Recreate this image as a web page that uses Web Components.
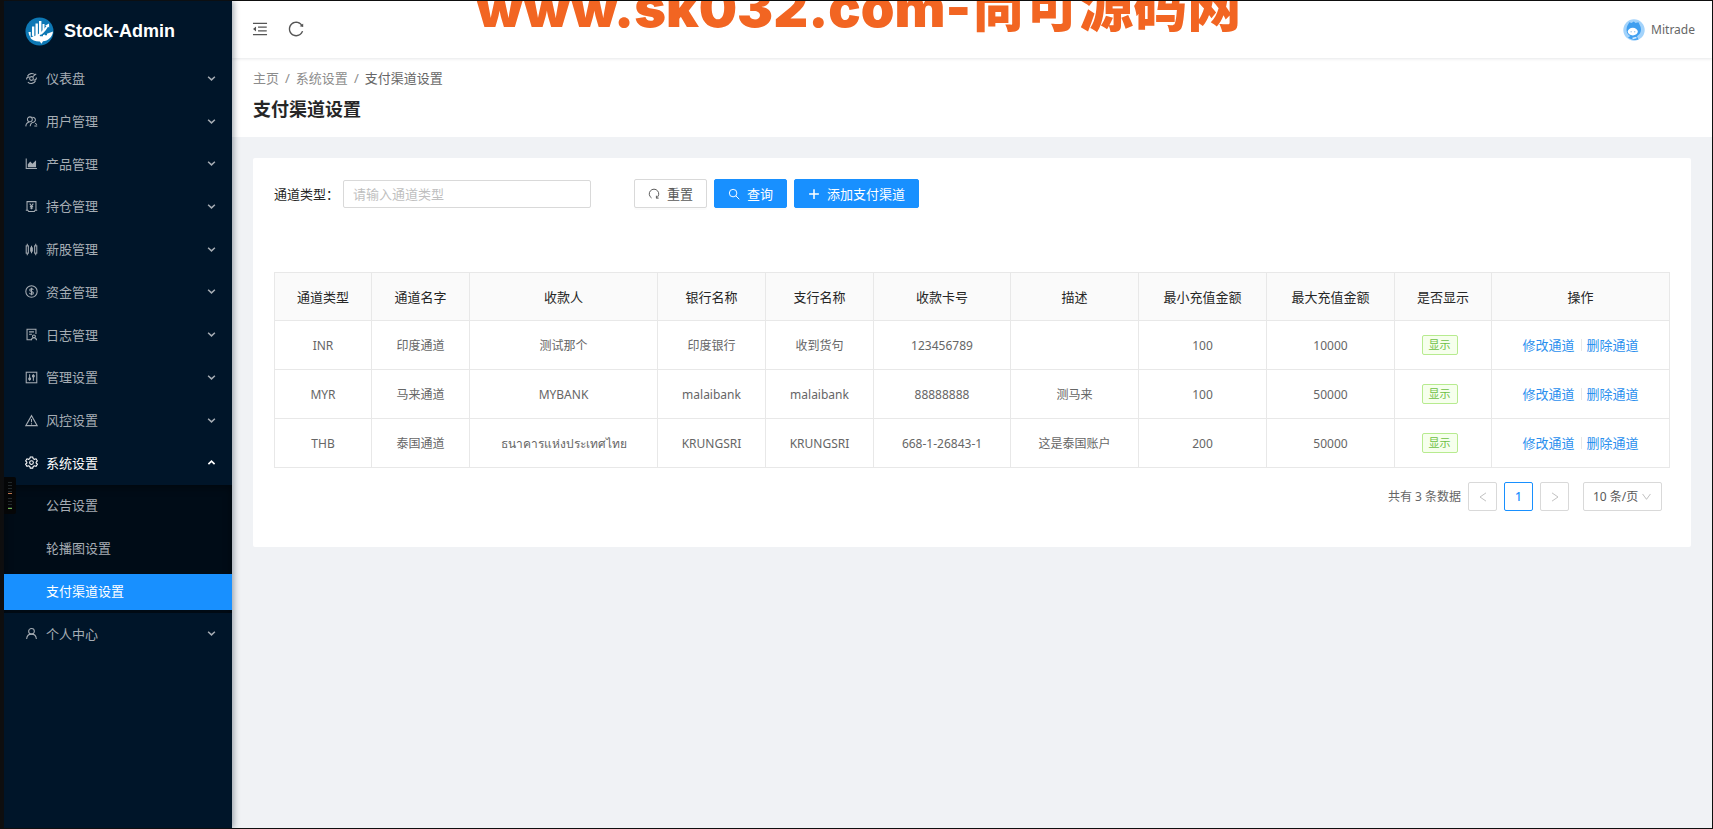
<!DOCTYPE html>
<html lang="zh-CN">
<head>
<meta charset="utf-8">
<title>Stock-Admin - 支付渠道设置</title>
<style>
  html, body { margin: 0; height: 100%; }
  body { font-family: "Noto Sans", "Noto Sans CJK SC", sans-serif; font-size: 12px; line-height: 20px; color: #666; background: #0f0f0f; }
</style>
</head>
<body>
<stock-app></stock-app>
<script>
const make = (tag, html, setup) => {
  const template = document.createElement('template');
  template.innerHTML = html;
  customElements.define(tag, class extends HTMLElement {
    constructor() {
      super();
      this.attachShadow({ mode: 'open' });
    }
    connectedCallback() {
      if (this.shadowRoot.childNodes.length) return;
      this.shadowRoot.append(template.content.cloneNode(true));
      if (setup) setup(this, this.shadowRoot);
    }
  });
};

/* Line icons live in a 16-unit box; the solid ones in a 1024-unit box. */
const ICONS = {
  dash: '<path d="M3 5.2A6 6 0 0 1 12.5 3.6M2 9.2C1.8 7 3.2 6 5.5 6M13 10.8A6 6 0 0 1 3.5 12.4M14 6.8c.2 2.2-1.2 3.2-3.5 3.2M13.8 2.2 9.5 5.8"/><circle cx="8" cy="8" r="2.3"/>',
  users: '<circle cx="6" cy="5.3" r="3"/><path d="M1 14c.2-3 1.8-5 4.4-5.4M9 3a3 3 0 1 1 1.6 5.8c-2.6.3-4 2.4-4.2 5M12.5 10c1 .6 1.7 1.4 2 2.2M11.5 13.5h3.5"/>',
  area: '<path d="M1.5 1.8v12.4h13.2"/><path fill="currentColor" stroke="none" d="M3.5 12.5V9l3-3.5 2.6 2.7L13.6 4v8.5z"/>',
  wallet: '<path d="M2.5 12.5V2h11v10.5M1 12.5h2.5l1 1.7h7l1-1.7H15M5.8 4.5 8 7.4l2.2-2.9M8 7.4v4M6 8h4M6 9.8h4"/>',
  candle: '<rect x="1.5" y="3.5" width="2.6" height="9"/><path d="M2.8 1v2.5M2.8 12.500v2.500M8 3.500v9"/><rect x="7" y="6" width="2" height="4"/><rect x="11.900" y="3.500" width="2.600" height="9"/><path d="M13.200 1v2.500M13.200 12.500v2.500"/>',
  money: '<circle cx="8" cy="8" r="7"/><path d="M10.200 6c-.3-.9-1.100-1.300-2.200-1.300-1.300 0-2.200.6-2.200 1.600C5.800 8.600 10.300 7.200 10.300 9.700c0 1-.9 1.700-2.300 1.700-1.300 0-2.200-.6-2.400-1.600M8 3.500v9"/>',
  audit: '<path d="M8 14.500H2.500v-13h11v6M5 4.800h6M5 7.600h3.500"/><circle cx="11" cy="10.300" r="1.800"/><path d="M7.800 15c.2-1.900 1.400-2.900 3.200-2.900s3 1 3.200 2.900"/>',
  control: '<rect x="1.500" y="1.500" width="13" height="13"/><path d="M5.700 4v8M10.300 4v8"/><circle cx="5.700" cy="9.500" r="1.200"/><circle cx="10.300" cy="6.300" r="1.200"/>',
  warn: '<path d="M8 2 15 14.300H1zM8 6.300v4M8 11.500v1.300"/>',
  gear: '<path d="M6.500 1.300h3l.6 2 1.500.8 2-.6 1.600 2.600-1.500 1.500v1l1.500 1.500-1.600 2.600-2-.6-1.500.8-.6 2h-3l-.6-2-1.500-.8-2 .6L.8 10.100l1.500-1.500v-1L.8 6.100l1.600-2.600 2 .6 1.500-.8z"/><circle cx="8" cy="8.100" r="2.300"/>',
  user: '<circle cx="8" cy="5.300" r="3.500"/><path d="M2 14.800c.3-3.700 2.600-6 6-6s5.700 2.300 6 6"/>',
  down: '<path stroke-width="2.600" d="m2 5 6 5.500L14 5"/>',
  up: '<path stroke-width="3" d="M2.500 11 8 5.700l5.500 5.300"/>',
  caret: '<path d="M1 3.500 8 13l7-9.500"/>',
  prev: '<path d="M12 2.500 4 8l8 5.500"/>',
  next: '<path d="m4 2.500 8 5.500-8 5.500"/>',
  search: '<circle cx="6.800" cy="6.800" r="5"/><path d="m10.500 10.500 4.500 4.500"/>',
  plus: '<path stroke-width="2" d="M8 1.500v13M1.500 8h13"/>',
  undo: '<path d="M4.800 13.300A6.300 6.300 0 1 1 11.200 13.300M11.200 10.300v3.200h3"/>',
  fold: '<path class="solid" d="M408 442h480c4.400 0 8-3.600 8-8v-56c0-4.400-3.600-8-8-8H408c-4.400 0-8 3.600-8 8v56c0 4.400 3.600 8 8 8zm-8 204c0 4.400 3.600 8 8 8h480c4.400 0 8-3.600 8-8v-56c0-4.400-3.600-8-8-8H408c-4.400 0-8 3.600-8 8v56zm504-486H120c-4.400 0-8 3.600-8 8v56c0 4.400 3.600 8 8 8h784c4.400 0 8-3.600 8-8v-56c0-4.400-3.600-8-8-8zm0 632H120c-4.400 0-8 3.600-8 8v56c0 4.400 3.600 8 8 8h784c4.400 0 8-3.600 8-8v-56c0-4.400-3.600-8-8-8zM115.400 518.900L271.700 642c5.800 4.600 14.400.5 14.400-6.900V388.900c0-7.400-8.500-11.500-14.400-6.900L115.400 505.100a8.740 8.740 0 000 13.800z"/>',
  reload: '<path class="solid" d="M909.100 209.300l-56.400 44.100C775.800 155.100 656.200 92 521.900 92 290 92 102.300 279.500 102 511.500 101.700 743.700 289.800 932 521.900 932c181.300 0 335.800-115 394.600-276.100 1.500-4.200-.7-8.900-4.900-10.300l-56.700-19.500a8 8 0 00-10.100 4.800c-1.800 5-3.800 10-5.900 14.900-17.300 41-42.100 77.800-73.700 109.400A344.770 344.770 0 01655.900 829c-42.300 17.900-87.400 27-133.800 27-46.500 0-91.500-9.100-133.800-27A341.500 341.500 0 01279 755.200a342.160 342.160 0 01-73.700-109.400c-17.900-42.400-27-87.400-27-133.900s9.100-91.500 27-133.900c17.300-41 42.100-77.800 73.700-109.400 31.600-31.600 68.400-56.400 109.300-73.800 42.300-17.900 87.400-27 133.800-27 46.500 0 91.500 9.100 133.800 27a341.500 341.500 0 01109.300 73.800c9.900 9.900 19.200 20.400 27.800 31.400l-60.200 47a8 8 0 003 14.100l175.600 43c5 1.200 9.900-2.600 9.900-7.700l.8-180.900c-.1-6.600-7.800-10.300-13-6.200z"/>'
};
make('ui-icon', `<style>
  :host { display: inline-block; width: 12px; height: 12px; flex: none; }
  svg { display: block; width: 100%; height: 100%; fill: none; stroke: currentColor; stroke-width: 1.3; }
  .solid { fill: currentColor; stroke: none; }
</style><svg aria-hidden="true"></svg>`, (host, root) => {
  const svg = root.querySelector('svg');
  const shape = ICONS[host.getAttribute('name')] || '';
  svg.setAttribute('viewBox', shape.includes('solid') ? '0 0 1024 1024' : '0 0 16 16');
  svg.innerHTML = shape;
});

/* One top-level entry of the side menu. */
make('nav-item', `<style>
  :host { display: flex; align-items: center; color: #a6adb4; }
  :host([open]) { color: #fff; }
  button { display: flex; align-items: center; box-sizing: border-box; width: 100%; height: 36px; padding: 0 16px 2px 21px; border: 0; background: none; color: inherit; font: inherit; text-align: left; cursor: pointer; }
  span { flex: 1; margin-left: 8px; }
  .mark { width: 13px; height: 13px; }
  .arrow { width: 9px; height: 9px; }
</style><button type="button"><ui-icon class="mark"></ui-icon><span><slot></slot></span><ui-icon class="arrow"></ui-icon></button>`, (host, root) => {
  const open = host.hasAttribute('open');
  for (const [cls, name] of [['mark', host.getAttribute('icon')], ['arrow', open ? 'up' : 'down']]) {
    const icon = document.createElement('ui-icon');
    icon.className = cls;
    icon.setAttribute('name', name);
    root.querySelector('.' + cls).replaceWith(icon);
  }
  root.querySelector('button').setAttribute('aria-expanded', open);
});

make('side-nav', `<style>
  :host { display: block; position: relative; z-index: 2; width: 228px; flex: none; background: #001529; box-shadow: 2px 0 6px rgba(0,21,41,.35); }
  .brand { display: flex; align-items: center; height: 57px; padding: 3px 0 0 21px; box-sizing: border-box; color: #fff; text-decoration: none; }
  .brand svg { width: 29px; height: 29px; margin-right: 10px; }
  .brand b { font: bold 18px/24px "Liberation Sans", Arial, sans-serif; }
  nav { display: grid; grid-auto-rows: 1fr; height: 598px; font-size: 13px; }
  .sub { grid-row: span 3; display: grid; grid-auto-rows: 1fr; align-items: center; background: #000c17; box-shadow: inset 0 2px 8px rgba(0,0,0,.45); }
  .sub a { line-height: 34px; padding: 0 0 2px 42px; color: #a6adb4; text-decoration: none; }
  .sub a[aria-current] { background: #1890ff; color: #fff; }
</style>
<a class="brand" href="#">
  <svg viewBox="0 0 29 29" aria-hidden="true"><circle cx="14.500" cy="14.500" r="14" fill="#0d78b5"/><path fill="#fff" d="M3.500 15h2.200v5.500C4.500 19 3.700 17 3.500 15zM7 9.500h2.300v11L7 18.500zM10.500 6.500h2.400v12l-2.400 1.500zM14 4h2.400v12L14 18zM17.500 7h2v5l-2 2.500z"/><path fill="#fff" d="M5 20.500c5-1 11-4 16.500-11.500l-1.500-.3 4-2.200.2 4-1.200-.8C20 15 17 17.500 14 19l6-1.500 8-3c-.5 5.500-5 9.500-10 9.800l-1.500 2.500-1.700-2.400C10.500 24.500 7 23.500 5 20.500z"/><path d="M15 18.500h3M20 17.500h2" stroke="#0d78b5" stroke-width="1.500"/></svg>
  <b>Stock-Admin</b>
</a>
<nav aria-label="主菜单">
  <nav-item icon="dash">仪表盘</nav-item>
  <nav-item icon="users">用户管理</nav-item>
  <nav-item icon="area">产品管理</nav-item>
  <nav-item icon="wallet">持仓管理</nav-item>
  <nav-item icon="candle">新股管理</nav-item>
  <nav-item icon="money">资金管理</nav-item>
  <nav-item icon="audit">日志管理</nav-item>
  <nav-item icon="control">管理设置</nav-item>
  <nav-item icon="warn">风控设置</nav-item>
  <nav-item icon="gear" open>系统设置</nav-item>
  <div class="sub">
    <a href="#notice">公告设置</a>
    <a href="#banner">轮播图设置</a>
    <a href="#channel" aria-current="page">支付渠道设置</a>
  </div>
  <nav-item icon="user">个人中心</nav-item>
</nav>`);

make('app-header', `<style>
  :host { display: flex; align-items: center; position: relative; z-index: 1; height: 57px; padding: 0 17px 0 19px; background: #fff; box-shadow: 0 1px 3px rgba(0,21,41,.1); }
  button { display: flex; align-items: center; padding: 0; border: 0; background: none; color: #555; font: inherit; cursor: pointer; }
  .tool { margin-right: 18px; padding-bottom: 2px; }
  .tool ui-icon { width: 18px; height: 18px; }
  .user { margin-left: auto; color: #666; }
  .user svg { width: 22px; height: 22px; margin-right: 6px; }
</style>
<button class="tool" type="button" aria-label="收起菜单"><ui-icon name="fold"></ui-icon></button>
<button class="tool" type="button" aria-label="刷新"><ui-icon name="reload"></ui-icon></button>
<button class="user" type="button">
  <svg viewBox="0 0 22 22" aria-hidden="true"><circle cx="11" cy="11" r="10.700" fill="#a3d3fb"/><path fill="#3f9ff0" d="M3.500 10.500C3.500 7 5.500 5 6.300 3.200L8.500 4l2.300-1.500L12.500 4l3-.7c.3 1.700 2.500 3.700 2.500 7.200 0 3-1.500 5-3.300 6L14 17.500l1.500 3c-3 .8-7.500.5-10.500-2L7.500 17c-2.500-1-4-3.500-4-6.500z"/><ellipse cx="9.800" cy="12.600" rx="5" ry="3.800" fill="#fff"/><path d="M7.500 12.800h1.300M11 12.800h1.300" stroke="#8bb8e0"/><path d="M9.500 19.500l4-1" stroke="#d7edff" stroke-width="1.500"/></svg>
  Mitrade
</button>`);

make('page-heading', `<style>
  :host { display: block; padding: 10px 21px 16px; background: #fff; }
  ol { display: flex; margin: 0; padding: 0; list-style: none; font-size: 13px; }
  li + li::before { content: "/"; margin: 0 6px; color: #8c8c8c; }
  a { color: #8c8c8c; text-decoration: none; }
  h1 { margin: 9px 0 0; font-size: 18px; line-height: 24px; font-weight: 700; color: #262626; }
</style>
<nav aria-label="面包屑"><ol><li><a href="#">主页</a></li><li><a href="#system">系统设置</a></li><li aria-current="page">支付渠道设置</li></ol></nav>
<h1>支付渠道设置</h1>`);

make('ui-button', `<style>
  :host { display: inline-block; }
  button { display: flex; align-items: center; gap: 7px; height: 29px; padding: 0 13px; border: 1px solid #d9d9d9; border-radius: 2px; background: #fff; color: #595959; font: inherit; white-space: nowrap; box-shadow: 0 2px 0 rgba(0,0,0,.015); cursor: pointer; }
  :host([primary]) button { background: #1890ff; border-color: #1890ff; color: #fff; }
</style><button type="button"><slot name="icon"></slot><slot></slot></button>`);

make('search-form', `<style>
  :host { display: block; font-size: 13px; }
  form { display: flex; align-items: center; }
  label { color: #262626; margin-right: 4px; }
  input { box-sizing: border-box; width: 248px; height: 28px; margin-right: 43px; padding: 0 9px; border: 1px solid #d9d9d9; border-radius: 2px; font: inherit; color: #595959; outline: none; }
  input::placeholder { color: #bfbfbf; opacity: 1; }
  .actions { display: flex; gap: 7px; }
</style>
<form>
  <label for="type">通道类型：</label><input id="type" type="text" placeholder="请输入通道类型">
  <div class="actions">
    <ui-button><ui-icon slot="icon" name="undo"></ui-icon>重置</ui-button>
    <ui-button primary><ui-icon slot="icon" name="search"></ui-icon>查询</ui-button>
    <ui-button primary><ui-icon slot="icon" name="plus"></ui-icon>添加支付渠道</ui-button>
  </div>
</form>`);

make('status-tag', `<style>
  :host { display: inline-block; margin-right: 7px; padding: 0 6px; border: 1px solid #b7eb8f; border-radius: 2px; background: #f6ffed; color: #6cc044; font-size: 11px; line-height: 18px; }
</style><slot></slot>`);

const COLUMNS = [['通道类型', 97], ['通道名字', 98], ['收款人', 188], ['银行名称', 108], ['支行名称', 108], ['收款卡号', 137], ['描述', 128], ['最小充值金额', 128], ['最大充值金额', 128], ['是否显示', 97], ['操作', 178]];
const ROWS = [
  ['INR', '印度通道', '测试那个', '印度银行', '收到货句', '123456789', '', '100', '10000'],
  ['MYR', '马来通道', 'MYBANK', 'malaibank', 'malaibank', '88888888', '测马来', '100', '50000'],
  ['THB', '泰国通道', 'ธนาคารแห่งประเทศไทย', 'KRUNGSRI', 'KRUNGSRI', '668-1-26843-1', '这是泰国账户', '200', '50000']
];
make('channel-table', `<style>
  :host { display: block; }
  table { width: 100%; table-layout: fixed; border-collapse: collapse; }
  th, td { box-sizing: border-box; height: 49px; padding: 2px 0 0; border: 1px solid #e8e8e8; text-align: center; white-space: nowrap; }
  th { height: 48px; padding: 0; background: #fafafa; color: #262626; font-weight: 400; font-size: 13px; }
  .state, .ops { padding: 0; }
  .ops { font-size: 13px; }
  a { color: #2a8fee; text-decoration: none; }
  a + a { margin-left: 6px; padding-left: 6px; background: linear-gradient(#e8e8e8, #e8e8e8) left center / 1px 12px no-repeat; }
</style><table><colgroup></colgroup><thead><tr></tr></thead><tbody></tbody></table>`, (host, root) => {
  root.querySelector('colgroup').innerHTML = COLUMNS.map(c => `<col style="width:${c[1]}px">`).join('');
  root.querySelector('thead tr').innerHTML = COLUMNS.map(c => `<th scope="col">${c[0]}</th>`).join('');
  root.querySelector('tbody').innerHTML = ROWS.map(r => `<tr>${r.map(v => `<td>${v}</td>`).join('')}<td class="state"><status-tag>显示</status-tag></td><td class="ops"><a href="#edit">修改通道</a><a href="#delete">删除通道</a></td></tr>`).join('');
});

make('page-pager', `<style>
  :host { display: flex; align-items: center; justify-content: flex-end; padding: 14px 7px 0 0; }
  p { margin: 0 7px 0 0; }
  button { display: flex; align-items: center; justify-content: center; width: 29px; height: 29px; margin-right: 7px; padding: 0; border: 1px solid #d9d9d9; border-radius: 2px; background: #fff; color: #bfbfbf; font: inherit; }
  button[aria-current] { border-color: #1890ff; color: #1890ff; font-weight: 500; }
  .size { display: grid; align-items: center; margin-left: 7px; }
  select { grid-area: 1 / 1; appearance: none; width: 79px; height: 29px; padding: 0 9px; border: 1px solid #d9d9d9; border-radius: 2px; background: #fff; color: #595959; font: inherit; }
  .size ui-icon { grid-area: 1 / 1; justify-self: end; width: 9px; height: 9px; margin-right: 11px; color: #aaa; pointer-events: none; }
</style>
<p>共有 3 条数据</p>
<button type="button" aria-label="上一页" disabled><ui-icon name="prev"></ui-icon></button>
<button type="button" aria-current="page">1</button>
<button type="button" aria-label="下一页" disabled><ui-icon name="next"></ui-icon></button>
<div class="size"><select aria-label="每页条数"><option>10 条/页</option><option>20 条/页</option></select><ui-icon name="caret"></ui-icon></div>`);

/* Small two-channel level meter docked on the left edge. */
make('level-meter', `<style>
  :host { display: grid; gap: 4px; box-sizing: border-box; width: 12px; height: 37px; padding: 5px 4px; border-radius: 0 2px 2px 0; background: #050607; }
  i { background: repeating-linear-gradient(#23292b 0 1px, transparent 1px 3px); border-bottom: 1px solid #c07850; }
  i + i { border-color: #69b04c; }
</style><i></i><i></i>`);

make('site-banner', `<style>
  :host { display: block; overflow: hidden; height: 36px; color: #f26522; font: 900 54px/54px "Inter", "Noto Sans CJK SC", sans-serif; white-space: nowrap; pointer-events: none; }
  span { display: block; margin-top: -20px; }
</style><span><slot></slot></span>`);

make('stock-app', `<style>
  :host { display: flex; position: relative; box-sizing: border-box; min-height: 100vh; padding: 1px 1px 1px 4px; background: #0f0f0f; }
  .body { flex: 1; min-width: 0; background: #f0f2f5; }
  main { margin: 21px; padding: 21px 22px 36px 21px; background: #fff; border-radius: 2px; }
  channel-table { margin-top: 64px; }
  site-banner { position: absolute; z-index: 3; top: 1px; left: 476px; }
  level-meter { position: absolute; z-index: 3; top: 477px; left: 4px; }
</style>
<side-nav></side-nav>
<div class="body">
  <app-header></app-header>
  <page-heading></page-heading>
  <main>
    <search-form></search-form>
    <channel-table></channel-table>
    <page-pager></page-pager>
  </main>
</div>
<site-banner>www.sk032.com-尚可源码网</site-banner>
<level-meter></level-meter>`);
</script>
</body>
</html>
